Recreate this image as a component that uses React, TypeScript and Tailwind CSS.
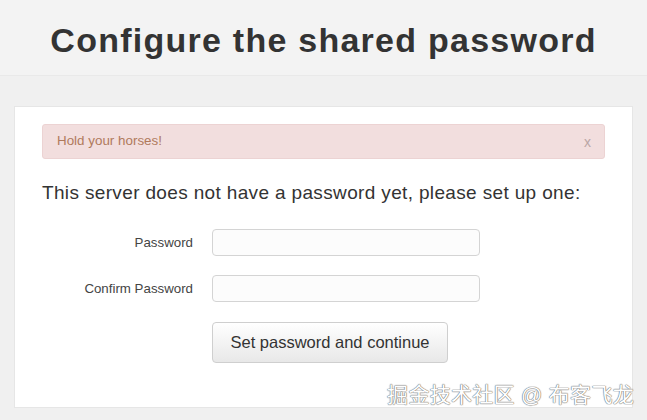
export default function App() {
  return (
    <div
      className="relative min-h-screen w-[647px] h-[420px] overflow-hidden bg-[#f0f0f0] text-[#333]"
      style={{ fontFamily: '"Liberation Sans", Arial, "Noto Sans CJK SC", sans-serif' }}
    >
      {/* Title */}
      <div className="h-[76px] pt-[23px] flex justify-center bg-[#f3f3f3] border-b border-[#e9e9e9]">
        <h1 className="text-[34px] font-bold text-[#333] leading-none tracking-[1.25px]">
          Configure the shared password
        </h1>
      </div>

      <div className="px-[14px] pt-[30px]">
        <div className="bg-white border border-[#e6e6e6] h-[302px] px-[27px] pt-[17px]">
          {/* Alert */}
          <div className="flex items-center justify-between h-[35px] rounded-[3px] bg-[#f2dede] border border-[#ecd3d3] pl-[14px] pr-[13px]">
            <span className="text-[13.4px] text-[#b07a5c]">Hold your horses!</span>
            <span className="text-[14px] text-[#bba6a6] leading-none">x</span>
          </div>

          <p className="mt-[24px] text-[19px] text-[#333] leading-none tracking-[0.35px]">
            This server does not have a password yet, please set up one:
          </p>

          {/* Form */}
          <div className="mt-[27px] flex flex-col gap-[19px]">
            <div className="flex items-center gap-[19px]">
              <label className="w-[151px] text-right text-[13.3px] text-[#444]">Password</label>
              <input
                type="password"
                className="w-[268px] h-[27px] rounded-[4px] border border-[#d4d4d4] bg-[#fcfcfc] outline-none"
              />
            </div>
            <div className="flex items-center gap-[19px]">
              <label className="w-[151px] text-right text-[13.3px] text-[#444]">Confirm Password</label>
              <input
                type="password"
                className="w-[268px] h-[27px] rounded-[4px] border border-[#d4d4d4] bg-[#fcfcfc] outline-none"
              />
            </div>
          </div>

          <div className="mt-[20px] pl-[170px]">
            <button className="w-[236px] h-[41px] rounded-[4px] border border-[#cfcfcf] bg-gradient-to-b from-white to-[#e8e8e8] text-[16.5px] text-[#333]">
              Set password and continue
            </button>
          </div>
        </div>
      </div>

      {/* Watermark */}
      <span
        className="absolute right-[13px] top-[384px] text-[21px] leading-none text-white tracking-[0.3px]"
        style={{ textShadow: "0 0 1px #777, 0 0 1px #777, 0 0 1px #777" }}
      >
        掘金技术社区 @ 布客飞龙
      </span>
    </div>
  );
}
